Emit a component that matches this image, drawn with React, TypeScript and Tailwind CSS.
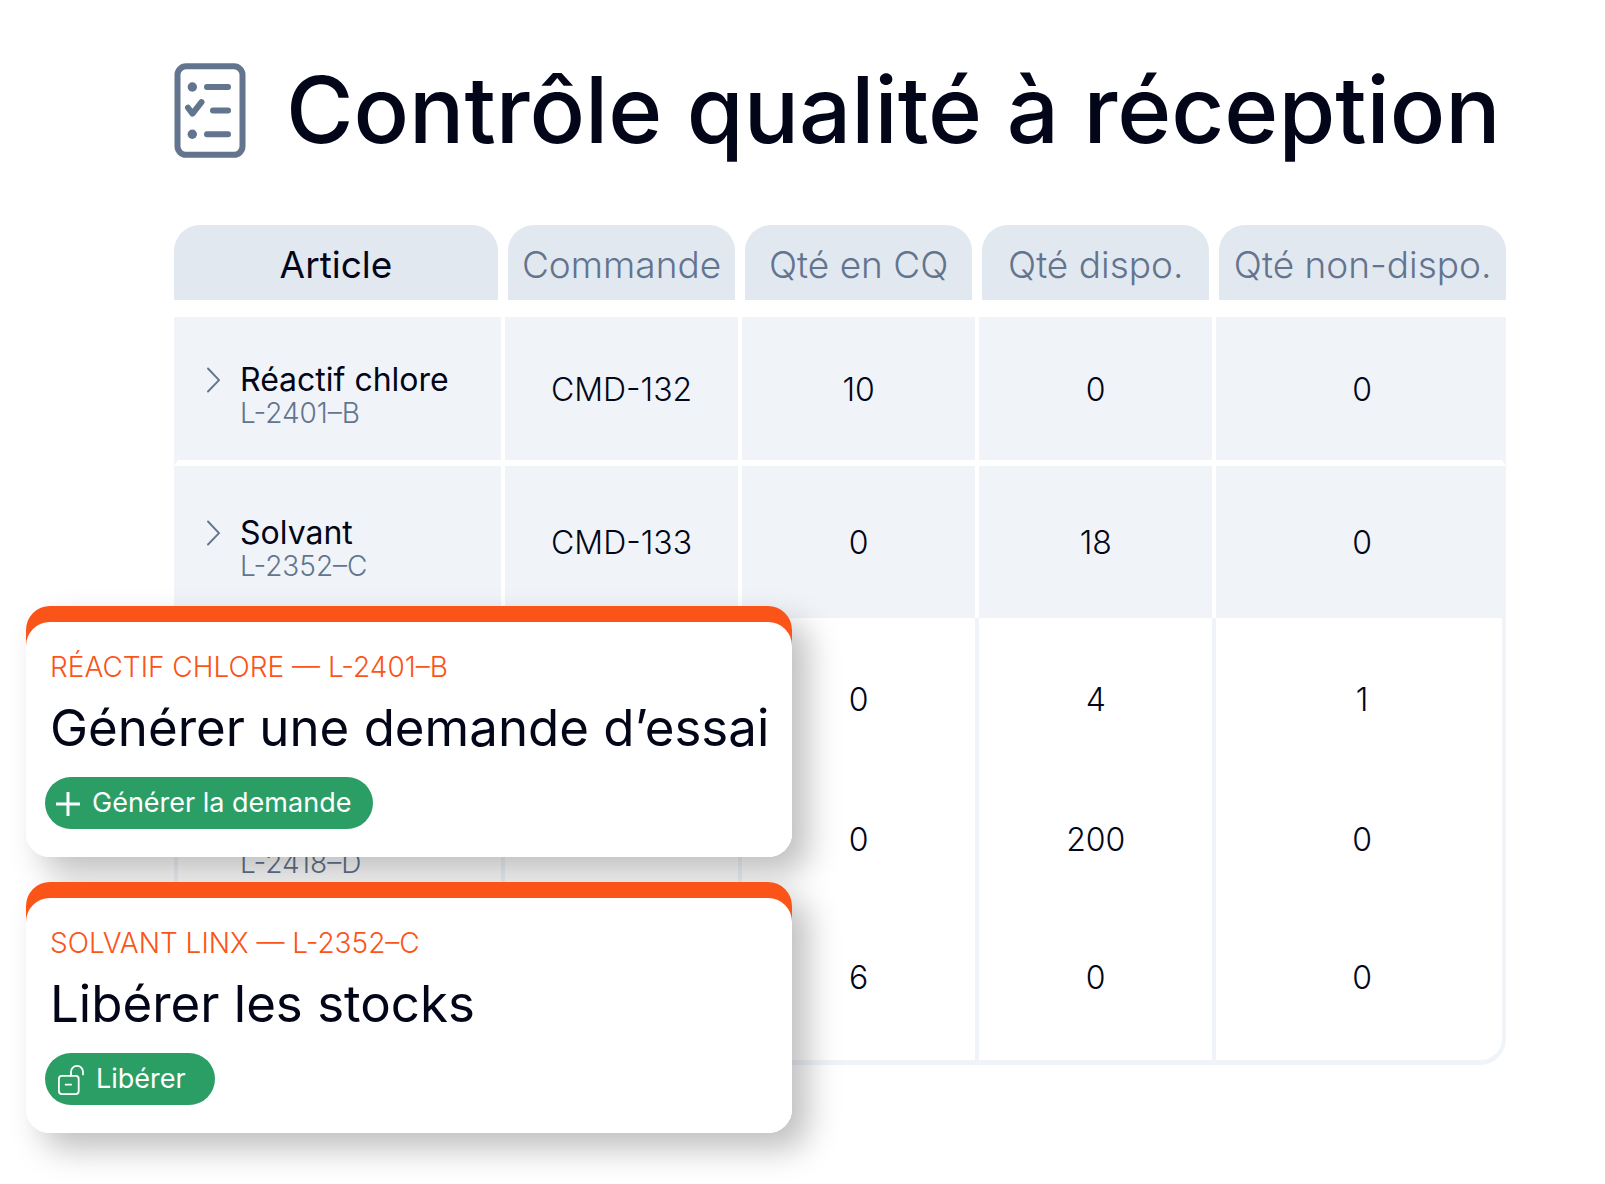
import { ReactNode } from "react";
import clsx from "clsx";

type Row = {
  article?: string;
  lot?: string;
  order?: string;
  inspection: number;
  available: number;
  unavailable: number;
  // height and vertical alignment of the row
  size: string;
};

const columns = [
  { label: "Article", width: "w-[24.7%]" },
  { label: "Commande", width: "w-[17.8%]" },
  { label: "Qté en CQ", width: "w-[17.8%]" },
  { label: "Qté dispo.", width: "w-[17.8%]" },
  { label: "Qté non-dispo.", width: "w-[21.9%]" },
];

const rows: Row[] = [
  { article: "Réactif chlore", lot: "L-2401–B", order: "CMD-132", inspection: 10, available: 0, unavailable: 0, size: "h-[149px] *:pt-[3px]" },
  { article: "Solvant", lot: "L-2352–C", order: "CMD-133", inspection: 0, available: 18, unavailable: 0, size: "h-[152px] *:pt-[2px]" },
  { inspection: 0, available: 4, unavailable: 1, size: "h-[150px] *:pt-[14px]" },
  { lot: "L-2418–D", inspection: 0, available: 200, unavailable: 0, size: "h-[140px] *:pt-[3px]" },
  { inspection: 6, available: 0, unavailable: 0, size: "h-[157px] *:pb-[12px]" },
];

function ChecklistIcon() {
  return (
    <svg className="h-24 w-[72px] shrink-0" viewBox="0 0 72 96" fill="none" stroke="#62748e" strokeWidth="6" strokeLinecap="round" strokeLinejoin="round" aria-hidden="true">
      <rect x="3.5" y="4.3" width="65" height="88.5" rx="8.5" />
      <path d="M33 25h21M39 48.5h15M33 72.2h21M14 45.7l4.5 6 9-11.5" />
      <circle cx="18.3" cy="25" r="4.7" fill="#62748e" stroke="none" />
      <circle cx="18.3" cy="72.2" r="4.7" fill="#62748e" stroke="none" />
    </svg>
  );
}

function ChevronIcon() {
  return (
    <svg className="h-[26px] w-[13px] shrink-0" viewBox="0 0 13 26" fill="none" stroke="#62748e" strokeWidth="1.9" strokeLinecap="round" strokeLinejoin="round" aria-hidden="true">
      <path d="M1 1.5L12 13.2L1 24.5" />
    </svg>
  );
}

function PlusIcon() {
  return (
    <svg className="size-6 shrink-0" viewBox="0 0 24 24" fill="none" stroke="currentColor" strokeWidth="3" aria-hidden="true">
      <path d="M12 0v24M0 12h24" />
    </svg>
  );
}

function UnlockIcon() {
  return (
    <svg className="h-8 w-7 shrink-0" viewBox="0 0 28 32" fill="none" stroke="currentColor" strokeWidth="1.8" strokeLinecap="round" aria-hidden="true">
      <rect x="2.9" y="11.9" width="19.8" height="18.2" rx="3" />
      <path d="M9.6 20.6h5.6M15 11.5V7.8a6 6 0 0 1 12 0v2.6" />
    </svg>
  );
}

function ActionCard({ context, title, action, icon }: { context: string; title: string; action: string; icon: ReactNode }) {
  return (
    <article className="rounded-3xl bg-linear-to-b from-[#fb5418] from-75% to-white to-75% pt-4 shadow-[16px_16px_32px_rgba(0,0,0,0.25)]">
      <div className="rounded-3xl bg-white px-6 pt-[27px] pb-7">
        <p className="text-[28px] leading-9 font-light whitespace-nowrap text-[#fb5418]">{context}</p>
        <h2 className="mt-[13px] text-[51px] leading-[60px] font-normal whitespace-nowrap">{title}</h2>
        <button type="button" className="mt-[19px] -ml-[5px] flex h-[52px] min-w-[170px] items-center gap-3 rounded-full bg-[#2b9e66] pt-px pr-[22px] pl-[11px] text-[27px] text-white">
          {icon}
          {action}
        </button>
      </div>
    </article>
  );
}

function StockTable() {
  return (
    <table className="w-full table-fixed border-separate border-spacing-0 text-center">
      <thead>
        <tr>
          {columns.map((column, i) => (
            <th key={column.label} scope="col" className={clsx(column.width, "px-[5px] pb-[17px] first:pl-0 last:pr-0")}>
              <div
                className={clsx(
                  "flex h-[75px] items-center justify-center rounded-t-[26px] bg-slate-200 pt-1 text-[37px] whitespace-nowrap",
                  i === 0 ? "font-normal" : "font-light text-[#62748e]",
                )}
              >
                {column.label}
              </div>
            </th>
          ))}
        </tr>
      </thead>
      <tbody className="text-[32px] font-light">
        {rows.map((row, i) => {
          const shaded = i < 2;
          const last = i === rows.length - 1;
          return (
            <tr
              key={i}
              className={clsx(
                row.size,
                "*:border-x-2 *:first:border-l-4 *:first:border-l-[#f0f4f9] *:last:border-r-4 *:last:border-r-[#f0f4f9] *:last:pl-[6px]",
                shaded ? "*:border-white *:bg-[#f0f4f9]" : "*:border-[#f0f4f9]",
                i === 0 && "*:border-b-6",
                last && "*:border-b-5 *:first:rounded-bl-[26px] *:last:rounded-br-[26px]",
              )}
            >
              <td className="text-left">
                {row.lot && (
                  <div className="flex gap-5 pt-[14px] pl-[29px]">
                    <span className="flex h-8 w-[13px] items-center">{row.article && <ChevronIcon />}</span>
                    <div>
                      <p className="h-8 text-[32px] leading-8 font-normal">{row.article}</p>
                      <p className="text-[28px] leading-[34px] text-[#62748e]">{row.lot}</p>
                    </div>
                  </div>
                )}
              </td>
              <td>{row.order}</td>
              <td>{row.inspection}</td>
              <td>{row.available}</td>
              <td>{row.unavailable}</td>
            </tr>
          );
        })}
      </tbody>
    </table>
  );
}

export default function App() {
  return (
    <main className="relative min-h-screen overflow-hidden bg-white pt-[62px] pr-[99px] pb-[118px] pl-[174px] font-['Inter',sans-serif] text-[#020618]">
      <header className="mb-[67px] flex items-center gap-10">
        <ChecklistIcon />
        <h1 className="text-[92px] leading-24 font-medium whitespace-nowrap">Contrôle qualité à réception</h1>
      </header>

      <StockTable />

      {/* Pending actions float over the bottom left of the table */}
      <div className="absolute top-[606px] left-[26px] flex w-[47.7%] flex-col gap-[25px]">
        <ActionCard context="RÉACTIF CHLORE — L-2401–B" title="Générer une demande d’essai" action="Générer la demande" icon={<PlusIcon />} />
        <ActionCard context="SOLVANT LINX — L-2352–C" title="Libérer les stocks" action="Libérer" icon={<UnlockIcon />} />
      </div>
    </main>
  );
}
